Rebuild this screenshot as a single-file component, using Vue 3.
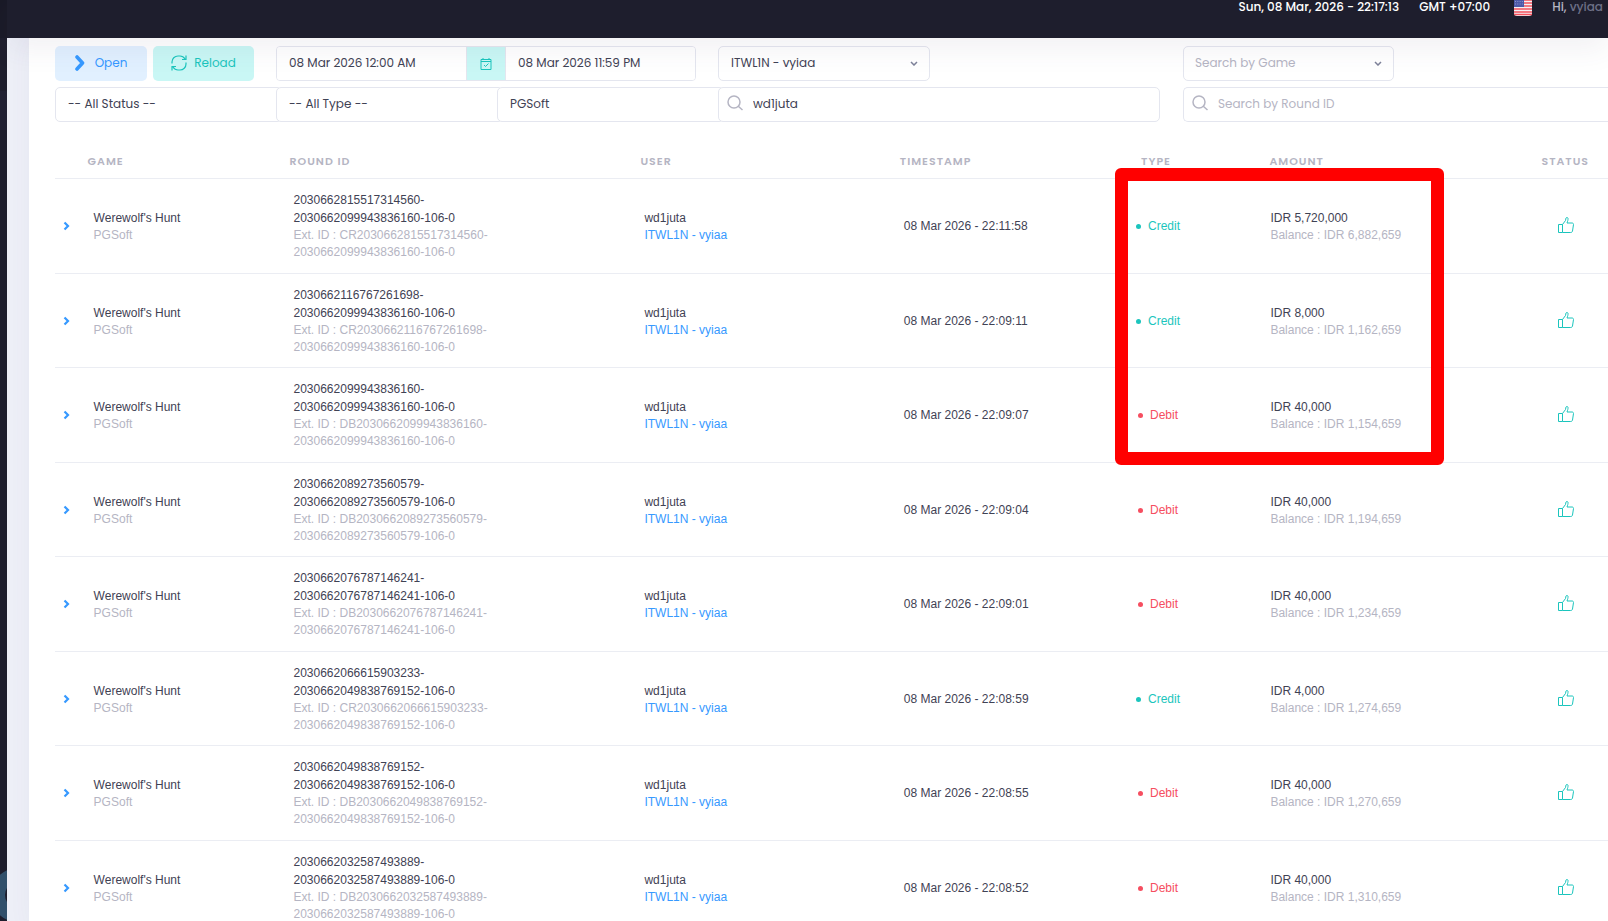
<template>
  <div class="page">
    <aside class="sidebar">
      <div class="sidebar__brand"></div>
      <div class="sidebar__active"></div>
      <div class="sidebar__chat"></div>
    </aside>

    <div class="wrapper">
      <header class="topbar">
        <span class="topbar__clock">Sun, 08 Mar, 2026 - 22:17:13</span>
        <span class="topbar__zone">GMT +07:00</span>
        <svg class="topbar__flag" viewBox="0 0 18 18" aria-label="English">
          <rect width="18" height="18" rx="3" fill="#f3f1f4" />
          <path d="M0 2h18M0 5h18M0 8h18M0 11h18M0 14h18" stroke="#f4525c" stroke-width="1.6" />
          <path d="M.5 16.5h17" stroke="#f4525c" stroke-width="1.6" stroke-linecap="round" />
          <rect width="10" height="9" fill="#4d59a8" />
          <path d="M1 3.5h8M1 6h8" stroke="#8c94cb" stroke-width="1" stroke-dasharray="1 1.3" />
        </svg>
        <span class="topbar__user">Hi, <b>vyiaa</b></span>
      </header>

      <main class="card">
        <form class="filters" @submit.prevent>
          <div class="filters__main">
            <div class="filters__row">
              <div class="buttons">
                <button type="button" class="btn btn--open">
                  <svg viewBox="0 0 10 16" width="10" height="16">
                    <path d="M2 2l5.500 6L2 14" fill="none" stroke="currentColor" stroke-width="3.600" stroke-linecap="round" stroke-linejoin="round" />
                  </svg>
                  Open
                </button>
                <button type="button" class="btn btn--reload">
                  <svg viewBox="0 0 16 16" width="16" height="16" fill="none" stroke="currentColor" stroke-width="1.200">
                    <path d="M1 8.500V7a6 6 0 0 1 6-6h2c2 0 3.800 1 5 2.800M15 .5V4.500h-4" />
                    <path d="M15 7.500V9a6 6 0 0 1-6 6H7c-2 0-3.800-1-5-2.800M1 15.500v-4h4" />
                  </svg>
                  Reload
                </button>
              </div>

              <div class="range">
                <input v-model="from" type="text" aria-label="From" />
                <span class="range__icon">
                  <svg viewBox="0 0 12 12" width="12" height="12" fill="none" stroke="currentColor">
                    <path d="M1 1.500h10v10H1zM1 3.500h10M3 0v2M9 0v2" />
                    <path d="M4 7l1.500 1.500L8.500 5.500" />
                  </svg>
                </span>
                <input v-model="to" type="text" aria-label="To" />
              </div>

              <div class="dropdown dropdown--agent">
                <select class="control" aria-label="Agent">
                  <option>ITWL1N - vyiaa</option>
                </select>
                <svg class="dropdown__arrow" viewBox="0 0 8 5" width="8" height="5">
                  <path d="M1 1l3 3 3-3" />
                </svg>
              </div>
            </div>

            <div class="filters__row">
              <select class="control joined" aria-label="Status">
                <option>-- All Status --</option>
              </select>
              <select class="control joined" aria-label="Type">
                <option>-- All Type --</option>
              </select>
              <select class="control joined" aria-label="Provider">
                <option>PGSoft</option>
              </select>
              <div class="search search--user">
                <svg class="search__icon" viewBox="0 0 16 16" width="16" height="16">
                  <circle cx="7" cy="7" r="6" />
                  <path d="M11 11l4.500 4" />
                </svg>
                <input v-model="user" type="text" class="control" aria-label="Search by User" />
              </div>
            </div>
          </div>

          <div class="filters__side">
            <div class="dropdown dropdown--game">
              <select class="control muted" aria-label="Game">
                <option>Search by Game</option>
              </select>
              <svg class="dropdown__arrow" viewBox="0 0 8 5" width="8" height="5">
                <path d="M1 1l3 3 3-3" />
              </svg>
            </div>
            <div class="search">
              <svg class="search__icon" viewBox="0 0 16 16" width="16" height="16">
                <circle cx="7" cy="7" r="6" />
                <path d="M11 11l4.500 4" />
              </svg>
              <input v-model="roundId" type="text" class="control control--open" placeholder="Search by Round ID" aria-label="Search by Round ID" />
            </div>
          </div>
        </form>

        <div class="table-wrap">
          <table>
            <thead>
              <tr>
                <th class="col-toggle"></th>
                <th class="col-game">GAME</th>
                <th class="col-round">ROUND ID</th>
                <th class="col-user">USER</th>
                <th class="col-time">TIMESTAMP</th>
                <th class="col-type">TYPE</th>
                <th class="col-amount">AMOUNT</th>
                <th class="col-status">STATUS</th>
              </tr>
            </thead>
            <tbody>
              <tr v-for="row in rows" :key="row.time">
                <td class="col-toggle">
                  <button type="button" class="toggle" aria-label="Show details">
                    <svg viewBox="0 0 7 10" width="7" height="10">
                      <path d="M1.500 1.500L5 5 1.500 8.500" fill="none" stroke="currentColor" stroke-width="2.200" />
                    </svg>
                  </button>
                </td>
                <td class="col-game">
                  <div class="main">Werewolf's Hunt</div>
                  <div class="sub">PGSoft</div>
                </td>
                <td>
                  <div class="main">{{ row.id }}-<br />{{ row.parent }}-106-0</div>
                  <div class="sub">Ext. ID : {{ row.credit ? 'CR' : 'DB' }}{{ row.id }}-<br />{{ row.parent }}-106-0</div>
                </td>
                <td>
                  <div class="main">wd1juta</div>
                  <div class="sub"><a href="#">ITWL1N - vyiaa</a></div>
                </td>
                <td>08 Mar 2026 - {{ row.time }}</td>
                <td class="col-type">
                  <span class="type" :class="row.credit ? 'type--credit' : 'type--debit'">
                    {{ row.credit ? 'Credit' : 'Debit' }}
                  </span>
                </td>
                <td class="col-amount">
                  <div class="main">IDR {{ row.amount }}</div>
                  <div class="sub">Balance : IDR {{ row.balance }}</div>
                </td>
                <td class="col-status">
                  <svg class="thumb" viewBox="0 0 16 16" width="16" height="16">
                    <path d="M.5 7.500h4v8h-4z" />
                    <path d="M4.500 7.500L7.500 3.500 8 1c.2-.7 1.800-.7 2 .3.200 1.400-.4 3-1 4.700h5c1 0 1.500.6 1.500 1.500L14.500 14c-.2 1-.8 1.500-1.800 1.500H4.500" />
                  </svg>
                </td>
              </tr>
            </tbody>
          </table>
          <div class="highlight"></div>
        </div>
      </main>
    </div>
  </div>
</template>

<script setup>
import { ref } from 'vue';

const from = ref('08 Mar 2026 12:00 AM');
const to = ref('08 Mar 2026 11:59 PM');
const user = ref('wd1juta');
const roundId = ref('');

const rows = ref([
  { id: '2030662815517314560', parent: '2030662099943836160', time: '22:11:58', credit: true, amount: '5,720,000', balance: '6,882,659' },
  { id: '2030662116767261698', parent: '2030662099943836160', time: '22:09:11', credit: true, amount: '8,000', balance: '1,162,659' },
  { id: '2030662099943836160', parent: '2030662099943836160', time: '22:09:07', credit: false, amount: '40,000', balance: '1,154,659' },
  { id: '2030662089273560579', parent: '2030662089273560579', time: '22:09:04', credit: false, amount: '40,000', balance: '1,194,659' },
  { id: '2030662076787146241', parent: '2030662076787146241', time: '22:09:01', credit: false, amount: '40,000', balance: '1,234,659' },
  { id: '2030662066615903233', parent: '2030662049838769152', time: '22:08:59', credit: true, amount: '4,000', balance: '1,274,659' },
  { id: '2030662049838769152', parent: '2030662049838769152', time: '22:08:55', credit: false, amount: '40,000', balance: '1,270,659' },
  { id: '2030662032587493889', parent: '2030662032587493889', time: '22:08:52', credit: false, amount: '40,000', balance: '1,310,659' },
]);
</script>

<style>
body {
  background: #eef0f8;
}
</style>

<style scoped>
.page {
  display: flex;
  height: 100vh;
  overflow: hidden;
  font-family: Poppins, Inter, sans-serif;
  font-size: 12px;
  color: #3f4254;
}

.page * {
  box-sizing: border-box;
}

/* Sidebar */
.sidebar {
  position: relative;
  flex: 0 0 7px;
  overflow: hidden;
  background: #1e1e2d;
}

.sidebar__brand {
  height: 38px;
  background: #1a1a27;
}

.sidebar__active {
  height: 39px;
  margin-top: 53px;
  background: #212133;
}

.sidebar__chat {
  position: absolute;
  bottom: -1px;
  left: -9px;
  width: 54px;
  height: 54px;
  border: 14px solid #31506b;
  border-radius: 50%;
  background: #1e1e2d;
}

.wrapper {
  display: flex;
  flex: 1;
  flex-direction: column;
  min-width: 0;
}

/* Top bar */
.topbar {
  position: relative;
  z-index: 1;
  display: flex;
  flex: none;
  align-items: center;
  justify-content: flex-end;
  height: 38px;
  padding: 0 5px 24px 0;
  background: #1e1e2d;
  box-shadow: 0 10px 30px rgba(82, 63, 105, 0.08);
  color: #fff;
  font-weight: 500;
  line-height: 14px;
  white-space: nowrap;
}

.topbar__zone {
  margin-left: 20px;
}

.topbar__flag {
  width: 18px;
  height: 18px;
  margin: 0 20px 0 24px;
}

.topbar__user {
  color: #b5b5c3;
}

.topbar__user b {
  color: #6d7087;
  font-weight: 500;
}

/* Filters */
.card {
  flex: 1;
  margin-left: 22px;
  padding: 8px 0 0 26px;
  background: #fff;
  box-shadow: 0 0 30px rgba(82, 63, 105, 0.05);
}

.filters {
  display: grid;
  grid-template-columns: 1105fr 425fr;
  gap: 23px;
}

.filters__main,
.filters__side {
  display: flex;
  flex-direction: column;
  gap: 6px;
}

.filters__row {
  display: grid;
  grid-template-columns: repeat(5, 1fr);
}

.buttons {
  display: flex;
  gap: 6px;
}

.btn {
  display: flex;
  align-items: center;
  justify-content: center;
  gap: 10px;
  width: 92px;
  height: 35px;
  padding: 0 0 1px;
  border: 0;
  border-radius: 5px;
  font: inherit;
}

.btn--open {
  background: #e1f0ff;
  color: #3699ff;
}

.btn--reload {
  gap: 7px;
  width: 101px;
  background: #c9f7f5;
  color: #1bc5bd;
}

.range {
  display: flex;
  grid-column: span 2;
  height: 35px;
  margin-right: 22px;
  border: 1px solid #e4e6ef;
  border-radius: 4px;
  overflow: hidden;
}

.range input {
  flex: 1;
  min-width: 0;
  padding: 0 12px 1px;
  border: 0;
  background: #fff;
  color: inherit;
  font: inherit;
}

.range__icon {
  display: flex;
  align-items: center;
  justify-content: center;
  width: 40px;
  border: solid #e4e6ef;
  border-width: 0 1px;
  background: #c9f7f5;
  color: #1bc5bd;
}

.control {
  display: block;
  width: 100%;
  height: 35px;
  padding: 0 12px 2px;
  border: 1px solid #e4e6ef;
  border-radius: 5px;
  appearance: none;
  background: #fff;
  color: #3f4254;
  font: inherit;
}

.control::placeholder,
.muted {
  color: #b5b5c3;
  opacity: 1;
}

.muted {
  padding-left: 11px;
}

/* Runs off the right side of the card */
.control--open {
  border-right: 0;
  border-radius: 5px 0 0 5px;
}

/* Tucks under the next field so only one border shows between them */
.joined {
  width: calc(100% + 6px);
}

.dropdown,
.search {
  position: relative;
}

.dropdown--agent {
  margin-right: 9px;
}

.dropdown--game {
  width: 211px;
}

.dropdown__arrow {
  position: absolute;
  top: 15px;
  right: 12px;
  fill: none;
  stroke: #7e8299;
  stroke-width: 1.5;
  pointer-events: none;
}

.search--user {
  grid-column: span 2;
}

.search__icon {
  position: absolute;
  top: 8px;
  left: 9px;
  fill: none;
  stroke: #b5b5c3;
  stroke-width: 1.5;
}

.search .control {
  padding-left: 34px;
}

/* Table */
.table-wrap {
  position: relative;
  margin-top: 22px;
}

table {
  width: 100%;
  border-collapse: separate;
  border-spacing: 0;
  table-layout: fixed;
}

th {
  height: 35px;
  padding: 0;
  border-bottom: 1px solid #ebedf3;
  color: #b5b5c3;
  font-size: 11px;
  font-weight: 600;
  letter-spacing: 1px;
  text-align: left;
}

td {
  padding: 12px 0 12px 4px;
  border-bottom: 1px solid #ebedf3;
  font-family: "Liberation Sans", Arial, sans-serif;
  line-height: 18px;
  white-space: nowrap;
}

tbody tr:nth-child(even) td {
  padding-bottom: 11px;
}

.col-toggle {
  width: 2.1%;
}

.col-game {
  width: 13%;
}

.col-round {
  width: 22.6%;
}

.col-user {
  width: 16.7%;
}

.col-time {
  width: 9.2%;
}

.col-type {
  width: 14.6%;
  text-align: center;
}

.col-amount {
  width: 16.3%;
}

.col-status {
  width: 5.5%;
  text-align: center;
}

td.col-toggle {
  padding-left: 8px;
}

td.col-game {
  padding-left: 6px;
}

td.col-amount,
td.col-status {
  padding-left: 1px;
}

.toggle {
  display: block;
  padding: 0;
  border: 0;
  background: none;
  color: #3699ff;
}

.toggle svg,
.thumb {
  display: block;
}

.sub {
  color: #b5b5c3;
  line-height: 17px;
}

.sub a {
  color: #3699ff;
  text-decoration: none;
}

.type {
  display: flex;
  align-items: center;
  justify-content: center;
  gap: 7px;
}

.type::before {
  width: 5px;
  height: 5px;
  border-radius: 50%;
  background: currentColor;
  content: "";
}

.type--credit {
  color: #1bc5bd;
}

.type--debit {
  color: #f64e60;
}

.thumb {
  margin: 0 auto 3px;
  fill: none;
  stroke: #1bc5bd;
}

/* Marks the three latest transactions */
.highlight {
  position: absolute;
  top: 24px;
  left: 68.25%;
  width: 21.2%;
  height: 297px;
  border: 13px solid #f00;
  border-radius: 6px;
  pointer-events: none;
}
</style>
